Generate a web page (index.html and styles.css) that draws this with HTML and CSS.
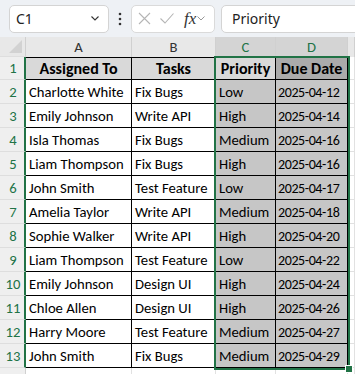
FILE: index.html
```html
<!DOCTYPE html>
<html>
<head>
   <title>Tasks</title>
   <link rel="stylesheet" href="styles.css">
</head>
<body>
   <!-- formula bar -->
   <div class="topbar">
       <div class="namebox">
           <span>C1</span>
           <svg class="chev" width="8" height="5" viewBox="0 0 8 5"><path d="M0.5 0.5 L4 4 L7.5 0.5" fill="none" stroke="#333" stroke-width="1.1"/></svg>
       </div>
       <div class="dots">
           <svg width="4" height="14" viewBox="0 0 4 14"><circle cx="2" cy="2" r="1.3" fill="#333"/><circle cx="2" cy="7" r="1.3" fill="#333"/><circle cx="2" cy="12" r="1.3" fill="#333"/></svg>
       </div>
       <div class="fx-buttons">
           <svg width="13" height="13" viewBox="0 0 13 13"><path d="M1 1 L12 12 M12 1 L1 12" stroke="#b5b5b5" stroke-width="1.1"/></svg>
           <svg width="14" height="11" viewBox="0 0 14 11"><path d="M0.5 5.5 L5 10 L13.5 0.5" fill="none" stroke="#b5b5b5" stroke-width="1.1"/></svg>
           <span class="fx">fx</span>
           <svg width="8" height="5" viewBox="0 0 8 5"><path d="M0.5 0.5 L4 4 L7.5 0.5" fill="none" stroke="#999" stroke-width="1"/></svg>
       </div>
       <div class="formula">Priority</div>
   </div>

   <!-- sheet -->
   <div class="sheet">
       <div class="row heads">
           <div class="rh corner"><span class="tri"></span></div>
           <div class="ch col-a">A</div>
           <div class="ch col-b">B</div>
           <div class="ch col-c sel">C</div>
           <div class="ch col-d sel">D</div>
           <div class="ch col-e"></div>
       </div>
       <div class="row r1">
           <div class="rh">1</div>
           <div class="cell col-a head">Assigned To</div>
           <div class="cell col-b head">Tasks</div>
           <div class="cell col-c head">Priority</div>
           <div class="cell col-d head shaded-head">Due Date</div>
           <div class="empty col-e"></div>
       </div>
       <div class="row"><div class="rh">2</div><div class="cell col-a">Charlotte White</div><div class="cell col-b">Fix Bugs</div><div class="cell col-c shaded">Low</div><div class="cell col-d shaded date">2025-04-12</div><div class="empty col-e"></div></div>
       <div class="row"><div class="rh">3</div><div class="cell col-a">Emily Johnson</div><div class="cell col-b">Write API</div><div class="cell col-c shaded">High</div><div class="cell col-d shaded date">2025-04-14</div><div class="empty col-e"></div></div>
       <div class="row"><div class="rh">4</div><div class="cell col-a">Isla Thomas</div><div class="cell col-b">Fix Bugs</div><div class="cell col-c shaded">Medium</div><div class="cell col-d shaded date">2025-04-16</div><div class="empty col-e"></div></div>
       <div class="row"><div class="rh">5</div><div class="cell col-a">Liam Thompson</div><div class="cell col-b">Fix Bugs</div><div class="cell col-c shaded">High</div><div class="cell col-d shaded date">2025-04-16</div><div class="empty col-e"></div></div>
       <div class="row"><div class="rh">6</div><div class="cell col-a">John Smith</div><div class="cell col-b">Test Feature</div><div class="cell col-c shaded">Low</div><div class="cell col-d shaded date">2025-04-17</div><div class="empty col-e"></div></div>
       <div class="row"><div class="rh">7</div><div class="cell col-a">Amelia Taylor</div><div class="cell col-b">Write API</div><div class="cell col-c shaded">Medium</div><div class="cell col-d shaded date">2025-04-18</div><div class="empty col-e"></div></div>
       <div class="row"><div class="rh">8</div><div class="cell col-a">Sophie Walker</div><div class="cell col-b">Write API</div><div class="cell col-c shaded">High</div><div class="cell col-d shaded date">2025-04-20</div><div class="empty col-e"></div></div>
       <div class="row"><div class="rh">9</div><div class="cell col-a">Liam Thompson</div><div class="cell col-b">Test Feature</div><div class="cell col-c shaded">Low</div><div class="cell col-d shaded date">2025-04-22</div><div class="empty col-e"></div></div>
       <div class="row"><div class="rh">10</div><div class="cell col-a">Emily Johnson</div><div class="cell col-b">Design UI</div><div class="cell col-c shaded">High</div><div class="cell col-d shaded date">2025-04-24</div><div class="empty col-e"></div></div>
       <div class="row"><div class="rh">11</div><div class="cell col-a">Chloe Allen</div><div class="cell col-b">Design UI</div><div class="cell col-c shaded">High</div><div class="cell col-d shaded date">2025-04-26</div><div class="empty col-e"></div></div>
       <div class="row"><div class="rh">12</div><div class="cell col-a">Harry Moore</div><div class="cell col-b">Test Feature</div><div class="cell col-c shaded">Medium</div><div class="cell col-d shaded date">2025-04-27</div><div class="empty col-e"></div></div>
       <div class="row"><div class="rh">13</div><div class="cell col-a">John Smith</div><div class="cell col-b">Fix Bugs</div><div class="cell col-c shaded">Medium</div><div class="cell col-d shaded date">2025-04-29</div><div class="empty col-e"></div></div>
       <div class="row r14"><div class="rh plain"></div><div class="empty col-a"></div><div class="empty col-b"></div><div class="empty col-c"></div><div class="empty col-d"></div><div class="empty col-e"></div></div>

       <!-- selected range C1:D13 -->
       <div class="selection"><span class="handle"></span></div>
   </div>
</body>
</html>
```

FILE: styles.css
```css
/* page */
body {
    margin: 0;
    background-color: white;
    font-family: Carlito, Lato, sans-serif;
    overflow: hidden;
}

/* formula bar */
.topbar {
    display: flex;
    align-items: center;
    height: 37px;
    padding-left: 9px;
    background-color: #eef1f5;
    font-family: "Noto Sans", sans-serif;
    font-size: 14px;
    color: #222;
}

.namebox {
    box-sizing: border-box;
    display: flex;
    align-items: center;
    justify-content: space-between;
    width: 100px;
    height: 28px;
    padding: 0 9px 0 6px;
    background-color: white;
    border: 1px solid #d4d4d4;
    border-radius: 5px;
}

.dots {
    display: flex;
    justify-content: center;
    width: 22px;
}

.fx-buttons {
    box-sizing: border-box;
    display: flex;
    align-items: center;
    gap: 9px;
    width: 84px;
    height: 28px;
    padding-left: 6px;
    background-color: white;
    border: 1px solid #dadada;
    border-radius: 5px;
}

.fx {
    margin-left: 1px;
    margin-right: -8px;
    font-family: "Liberation Serif", serif;
    font-style: italic;
    font-size: 17px;
    color: #333;
}

.formula {
    box-sizing: border-box;
    flex: 1;
    height: 28px;
    margin-left: 6px;
    margin-right: -10px;
    padding-left: 10px;
    line-height: 26px;
    background-color: white;
    border: 1px solid #d4d4d4;
    border-radius: 5px;
}

/* sheet grid */
.sheet {
    position: relative;
    font-size: 14.67px;
}

.row {
    display: flex;
    height: 24px;
}

.row.heads {
    height: 20px;
}

.row.r1 {
    height: 23px;
}

.col-a { width: 106px; }
.col-b { width: 84px; }
.col-c { width: 60px; }
.col-d { width: 72px; }
.col-e { flex: 1; }

/* row numbers */
.rh {
    box-sizing: border-box;
    display: flex;
    align-items: flex-end;
    justify-content: center;
    width: 26px;
    padding-bottom: 2px;
    padding-left: 2px;
    background-color: #efefef;
    border-right: 2px solid #217346;
    border-bottom: 1px solid #dedede;
    color: #217346;
}

.rh.corner,
.rh.plain {
    border-right: 1px solid #d0d0d0;
}

.rh.corner {
    position: relative;
    background-color: #e8e8e8;
}

.tri {
    position: absolute;
    right: 3px;
    bottom: 3px;
    width: 0;
    height: 0;
    border-left: 13px solid transparent;
    border-bottom: 13px solid #d2d2d2;
}

/* column letters */
.ch {
    box-sizing: border-box;
    display: flex;
    align-items: center;
    justify-content: center;
    background-color: #e8e8e8;
    border-right: 1px solid #d0d0d0;
    color: #333;
}

.ch.sel {
    background-color: #d4d4d4;
    color: #217346;
}

/* cells */
.cell {
    box-sizing: border-box;
    display: flex;
    align-items: flex-end;
    padding: 0 3px 2px;
    white-space: nowrap;
    overflow: hidden;
    border-right: 1px solid #000;
    border-bottom: 1px solid #000;
    color: #000;
}

.r1 .cell {
    border-top: 1px solid #000;
}

.cell.head {
    justify-content: center;
    padding: 0 1px 1px;
    font-size: 16px;
    font-weight: bold;
    background-color: #d9d9d9;
}

.cell.shaded {
    background-color: #c6c6c6;
}

.cell.shaded-head {
    background-color: #ababab;
}

/* dates are set a little tighter to fit the narrow column */
.cell.date {
    padding-left: 2px;
    font-size: 14px;
    letter-spacing: -0.4px;
}

.empty {
    box-sizing: border-box;
    border-right: 1px solid #e1e1e1;
    border-bottom: 1px solid #e1e1e1;
}

/* selection outline */
.selection {
    position: absolute;
    left: 214px;
    top: 19px;
    width: 136px;
    height: 314px;
    box-sizing: border-box;
    border: 2px solid #217346;
}

.handle {
    position: absolute;
    right: -5px;
    bottom: -5px;
    width: 6px;
    height: 6px;
    background-color: #217346;
    border: 1px solid white;
}
```
